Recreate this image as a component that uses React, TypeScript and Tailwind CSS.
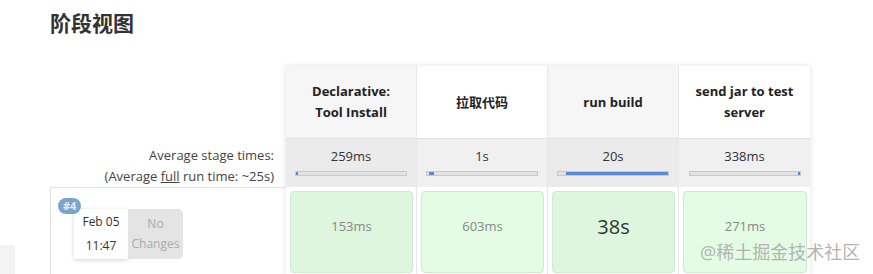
const stages = [
  { lines: ["Declarative:", "Tool Install"], avg: "259ms", from: 0, pct: 1.5, run: "153ms", big: false },
  { lines: ["拉取代码"], avg: "1s", from: 1.5, pct: 5, run: "603ms", big: false },
  { lines: ["run build"], avg: "20s", from: 7, pct: 93, run: "38s", big: true },
  { lines: ["send jar to test", "server"], avg: "338ms", from: 99, pct: 1, run: "271ms", big: false },
];

export default function App() {
  return (
    <div
      className="relative h-[274px] w-[873px] overflow-hidden bg-white text-[#333]"
      style={{ fontFamily: '"Open Sans", "Noto Sans CJK SC", sans-serif' }}
    >
      <h2 className="pl-[50px] pt-[9px] text-[21px] font-bold leading-[28px] text-[#333]">阶段视图</h2>

      <div className="mt-[29px] flex pl-[50px]">
        <div className="flex w-[236px] flex-col">
          <div className="h-[72px]" />
          <div className="flex h-[49px] flex-col items-end justify-center pr-[12px] pt-[7px] text-[13px] leading-[21px] text-[#444]">
            <span>Average stage times:</span>
            <span>
              (Average <span className="underline">full</span> run time: ~25s)
            </span>
          </div>
          <div className="relative h-[90px] border-l border-t border-[#e2e2e2]">
            <span className="absolute left-[7px] top-[10px] rounded-full bg-[#7aa3cf] px-[5px] text-[11px] font-bold leading-[16px] text-white/80">
              #4
            </span>
            <div className="ml-[23px] mt-[21px] flex">
              <div className="flex h-[50px] w-[54px] flex-col items-center justify-center gap-[4px] bg-white text-[12px] leading-[20px] shadow-[0_1px_4px_rgba(0,0,0,0.18)]">
                <span>Feb 05</span>
                <span>11:47</span>
              </div>
              <div className="flex h-[50px] w-[55px] flex-col items-center justify-center rounded-r-[5px] bg-[#e4e4e4] text-[12px] leading-[20px] text-[#aaa]">
                <span>No</span>
                <span>Changes</span>
              </div>
            </div>
          </div>
        </div>

        <div className="flex shadow-[0_0_6px_rgba(0,0,0,0.12)]">
          {stages.map((s, i) => (
            <div key={s.avg} className="flex w-[131px] flex-col border-r border-[#e8e8e8] last:border-r-0">
              <div
                className={`flex h-[72px] flex-col items-center justify-center whitespace-nowrap text-center text-[13px] font-bold leading-[21px] text-[#222] ${
                  i % 2 === 0 ? "bg-[#f6f6f6]" : "bg-white"
                }`}
              >
                {s.lines.map((l) => (
                  <span key={l}>{l}</span>
                ))}
              </div>
              <div
                className={`flex h-[49px] flex-col items-center border-t border-[#e2e2e2] pt-[8px] ${
                  i % 2 === 0 ? "bg-[#ebebeb]" : "bg-[#f0f0f0]"
                }`}
              >
                <span className="text-[13px] leading-[18px]">{s.avg}</span>
                <div className="relative mt-[6px] h-[5px] w-[112px] border border-[#c9c9c9] bg-[#e2e2e2]">
                  <div
                    className="absolute inset-y-0 min-w-[2px] bg-[#5c8ad6]"
                    style={{ left: `${s.from}%`, width: `${s.pct}%` }}
                  />
                </div>
              </div>
              <div className="h-[90px] bg-white p-[4px] pr-[3px]">
                <div
                  className={`flex h-full items-center justify-center rounded-[4px] border border-[#cfe8cf] pb-[10px] ${
                    i % 2 === 0 ? "bg-[#ddf6dd]" : "bg-[#e4fbe4]"
                  }`}
                >
                  <span className={s.big ? "text-[20px] text-[#333]" : "text-[13px] text-[#888]"}>{s.run}</span>
                </div>
              </div>
            </div>
          ))}
        </div>
      </div>

      <div className="absolute bottom-0 left-0 h-[29px] w-[15px] bg-[#f3f3f3]" />
      <span className="absolute left-[700px] top-[241px] text-[18px] leading-[22px] text-[#aaa]/90">@稀土掘金技术社区</span>
    </div>
  );
}
